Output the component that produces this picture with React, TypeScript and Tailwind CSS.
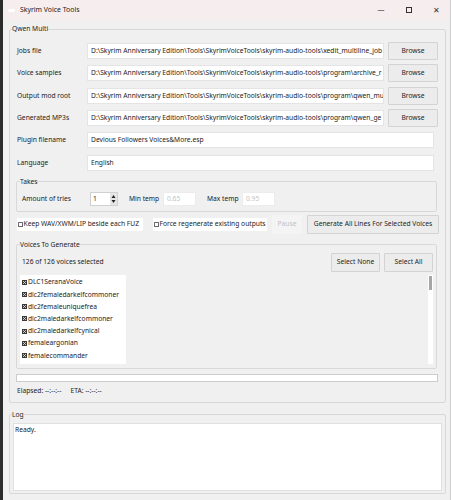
import * as React from "react";

const font = { fontFamily: '"Noto Sans", "Open Sans", sans-serif' };

const paths = [
  { label: "Jobs file", value: "D:\\Skyrim Anniversary Edition\\Tools\\SkyrimVoiceTools\\skyrim-audio-tools\\xedit_multiline_job" },
  { label: "Voice samples", value: "D:\\Skyrim Anniversary Edition\\Tools\\SkyrimVoiceTools\\skyrim-audio-tools\\program\\archive_r" },
  { label: "Output mod root", value: "D:\\Skyrim Anniversary Edition\\Tools\\SkyrimVoiceTools\\skyrim-audio-tools\\program\\qwen_mu" },
  { label: "Generated MP3s", value: "D:\\Skyrim Anniversary Edition\\Tools\\SkyrimVoiceTools\\skyrim-audio-tools\\program\\qwen_ge" },
];

const voices = [
  "DLC1SeranaVoice",
  "dlc2femaledarkelfcommoner",
  "dlc2femaleuniquefrea",
  "dlc2maledarkelfcommoner",
  "dlc2maledarkelfcynical",
  "femaleargonian",
  "femalecommander",
];

function Button({ children, className = "" }: { children: React.ReactNode; className?: string }) {
  return (
    <button className={"flex items-center justify-center bg-[#ececec] border border-[#d3d3d3] rounded-[1px] text-[#1e1e1e] " + className}>
      {children}
    </button>
  );
}

function TextBox({ value, className = "" }: { value: string; className?: string }) {
  return (
    <div className={"h-[16px] bg-white border border-[#e4e4e4] flex items-center px-[3px] overflow-hidden whitespace-nowrap text-[#222] " + className}>
      {value}
    </div>
  );
}

function Box() {
  return <span className="inline-block w-[5px] h-[5px] border border-[#6a6a6a] mr-[0.5px] align-[-0.5px]" />;
}

function Checked() {
  return (
    <svg width="5" height="5" viewBox="0 0 5 5" className="mr-[1px] shrink-0">
      <rect x="0" y="0" width="5" height="5" fill="#3a3a3a" />
      <path d="M1 1 L4 4 M4 1 L1 4" stroke="#e8e8e8" strokeWidth="0.8" />
    </svg>
  );
}

export default function App() {
  return (
    <div className="w-[451px] h-[500px] flex bg-[#2b2b2b] text-[6.7px] leading-[10px] text-[#222]" style={font}>
      <div className="ml-[3px] flex-1 flex flex-col bg-[#f0f0f0] border-r border-[#cfcfcf]">
        {/* title bar */}
        <div className="h-[20px] shrink-0 bg-[#f6eeee] flex items-center">
          <div className="ml-[5px] w-[7px] h-[3px] rounded-full bg-white" />
          <span className="ml-[5px] text-[6.9px] text-[#1b1b1b]">Skyrim Voice Tools</span>
          <div className="ml-auto flex items-center text-[#333]">
            <span className="w-[30px] text-center text-[7px]">—</span>
            <span className="w-[26px] flex justify-center">
              <span className="w-[6px] h-[6px] border border-[#333]" />
            </span>
            <span className="w-[28px] text-center text-[8px] font-light">✕</span>
          </div>
        </div>

        <fieldset className="ml-[6px] mt-[4px] w-[437px] border border-[#d8d8d8] rounded-[2px]">
          <legend className="ml-[2px] leading-[10px]">Qwen Multi</legend>

          <div className="pt-[6px] pl-[7px]">
            {paths.map((p) => (
              <div key={p.label} className="h-[22.3px] flex items-center">
                <span className="w-[70px]">{p.label}</span>
                <TextBox value={p.value} className="w-[297px]" />
                <Button className="ml-[4px] w-[50px] h-[18px]">Browse</Button>
              </div>
            ))}
            <div className="h-[22.3px] flex items-center">
              <span className="w-[70px]">Plugin filename</span>
              <TextBox value="Devious Followers Voices&More.esp" className="w-[347px]" />
            </div>
            <div className="h-[22.3px] flex items-center">
              <span className="w-[70px]">Language</span>
              <TextBox value="English" className="w-[347px]" />
            </div>
          </div>

          <fieldset className="ml-[6px] mt-[3px] w-[421px] border border-[#d8d8d8] rounded-[2px]">
            <legend className="ml-[3px] leading-[10px]">Takes</legend>
            <div className="h-[24px] flex items-center pl-[5px]">
              <span className="w-[68px]">Amount of tries</span>
              <div className="w-[28px] h-[14px] bg-white border border-[#d0d0d0] flex items-center pl-[2px]">
                <span className="flex-1">1</span>
                <svg width="7" height="12" viewBox="0 0 7 12">
                  <rect x="0" y="0" width="7" height="12" fill="#e6e6e6" />
                  <path d="M1.5 5 L3.5 2 L5.5 5 Z" fill="#222" />
                  <path d="M1.5 7 L3.5 10 L5.5 7 Z" fill="#222" />
                </svg>
              </div>
              <span className="ml-[11px] w-[34px]">Min temp</span>
              <div className="w-[33px] h-[14px] bg-white border border-[#ececec] flex items-center pl-[3px] text-[#c4c4c4]">0.65</div>
              <span className="ml-[11px] w-[35px]">Max temp</span>
              <div className="w-[33px] h-[14px] bg-white border border-[#ececec] flex items-center pl-[3px] text-[#c4c4c4]">0.95</div>
            </div>
          </fieldset>

          <div className="ml-[6px] mt-[3px] h-[19px] flex items-center">
            <div className="ml-[1px] w-[126px] h-[13px] bg-white flex items-center pl-[1px] whitespace-nowrap">
              <Box />Keep WAV/XWM/LIP beside each FUZ
            </div>
            <div className="ml-[10px] w-[114px] h-[13px] bg-white flex items-center pl-[1px] whitespace-nowrap">
              <Box />Force regenerate existing outputs
            </div>
            <div className="ml-[5px] w-[30px] h-[19px] bg-[#f4f4f4] flex items-center justify-center text-[#c2c2c2]">Pause</div>
            <Button className="ml-[5px] w-[132px] h-[19px] whitespace-nowrap">Generate All Lines For Selected Voices</Button>
          </div>

          <fieldset className="ml-[6px] mt-[6px] w-[421px] border border-[#d8d8d8] rounded-[2px]">
            <legend className="ml-[3px] leading-[10px]">Voices To Generate</legend>
            <div className="pt-[3px] pl-[5px] pr-[3px] h-[22px] flex items-center">
              <span>126 of 126 voices selected</span>
              <Button className="ml-auto w-[49px] h-[19px]">Select None</Button>
              <Button className="ml-[4px] w-[49px] h-[19px]">Select All</Button>
            </div>
            <div className="mt-[3px] mb-[4px] pl-[3px] pr-[3px] flex h-[89px]">
              <div className="w-[106px] bg-white pt-[1.5px] pl-[2px]">
                {voices.map((v) => (
                  <div key={v} className="h-[12.2px] flex items-center whitespace-nowrap">
                    <Checked />
                    {v}
                  </div>
                ))}
              </div>
              <div className="ml-auto w-[5px] bg-white pt-[1px] flex justify-center">
                <div className="w-[3px] h-[14px] bg-[#a6a6a6]" />
              </div>
            </div>
          </fieldset>

          <div className="ml-[6px] mt-[5px] w-[422px] h-[8px] bg-white border border-[#cccccc]" />
          <div className="ml-[7px] mt-[4px] h-[10px] flex items-center">
            <span>Elapsed: --:--:--</span>
            <span className="ml-[9px]">ETA: --:--:--</span>
          </div>
          <div className="h-[6px]" />
        </fieldset>

        <fieldset className="ml-[6px] mt-[7px] w-[437px] border border-[#d8d8d8] rounded-[2px]">
          <legend className="ml-[2px] leading-[10px]">Log</legend>
          <div className="ml-[3px] mt-[3px] mb-[2px] w-[429px] h-[68px] bg-white border border-[#e0e0e0] px-[1px] pt-[1px]">
            Ready.
          </div>
        </fieldset>
      </div>
    </div>
  );
}
